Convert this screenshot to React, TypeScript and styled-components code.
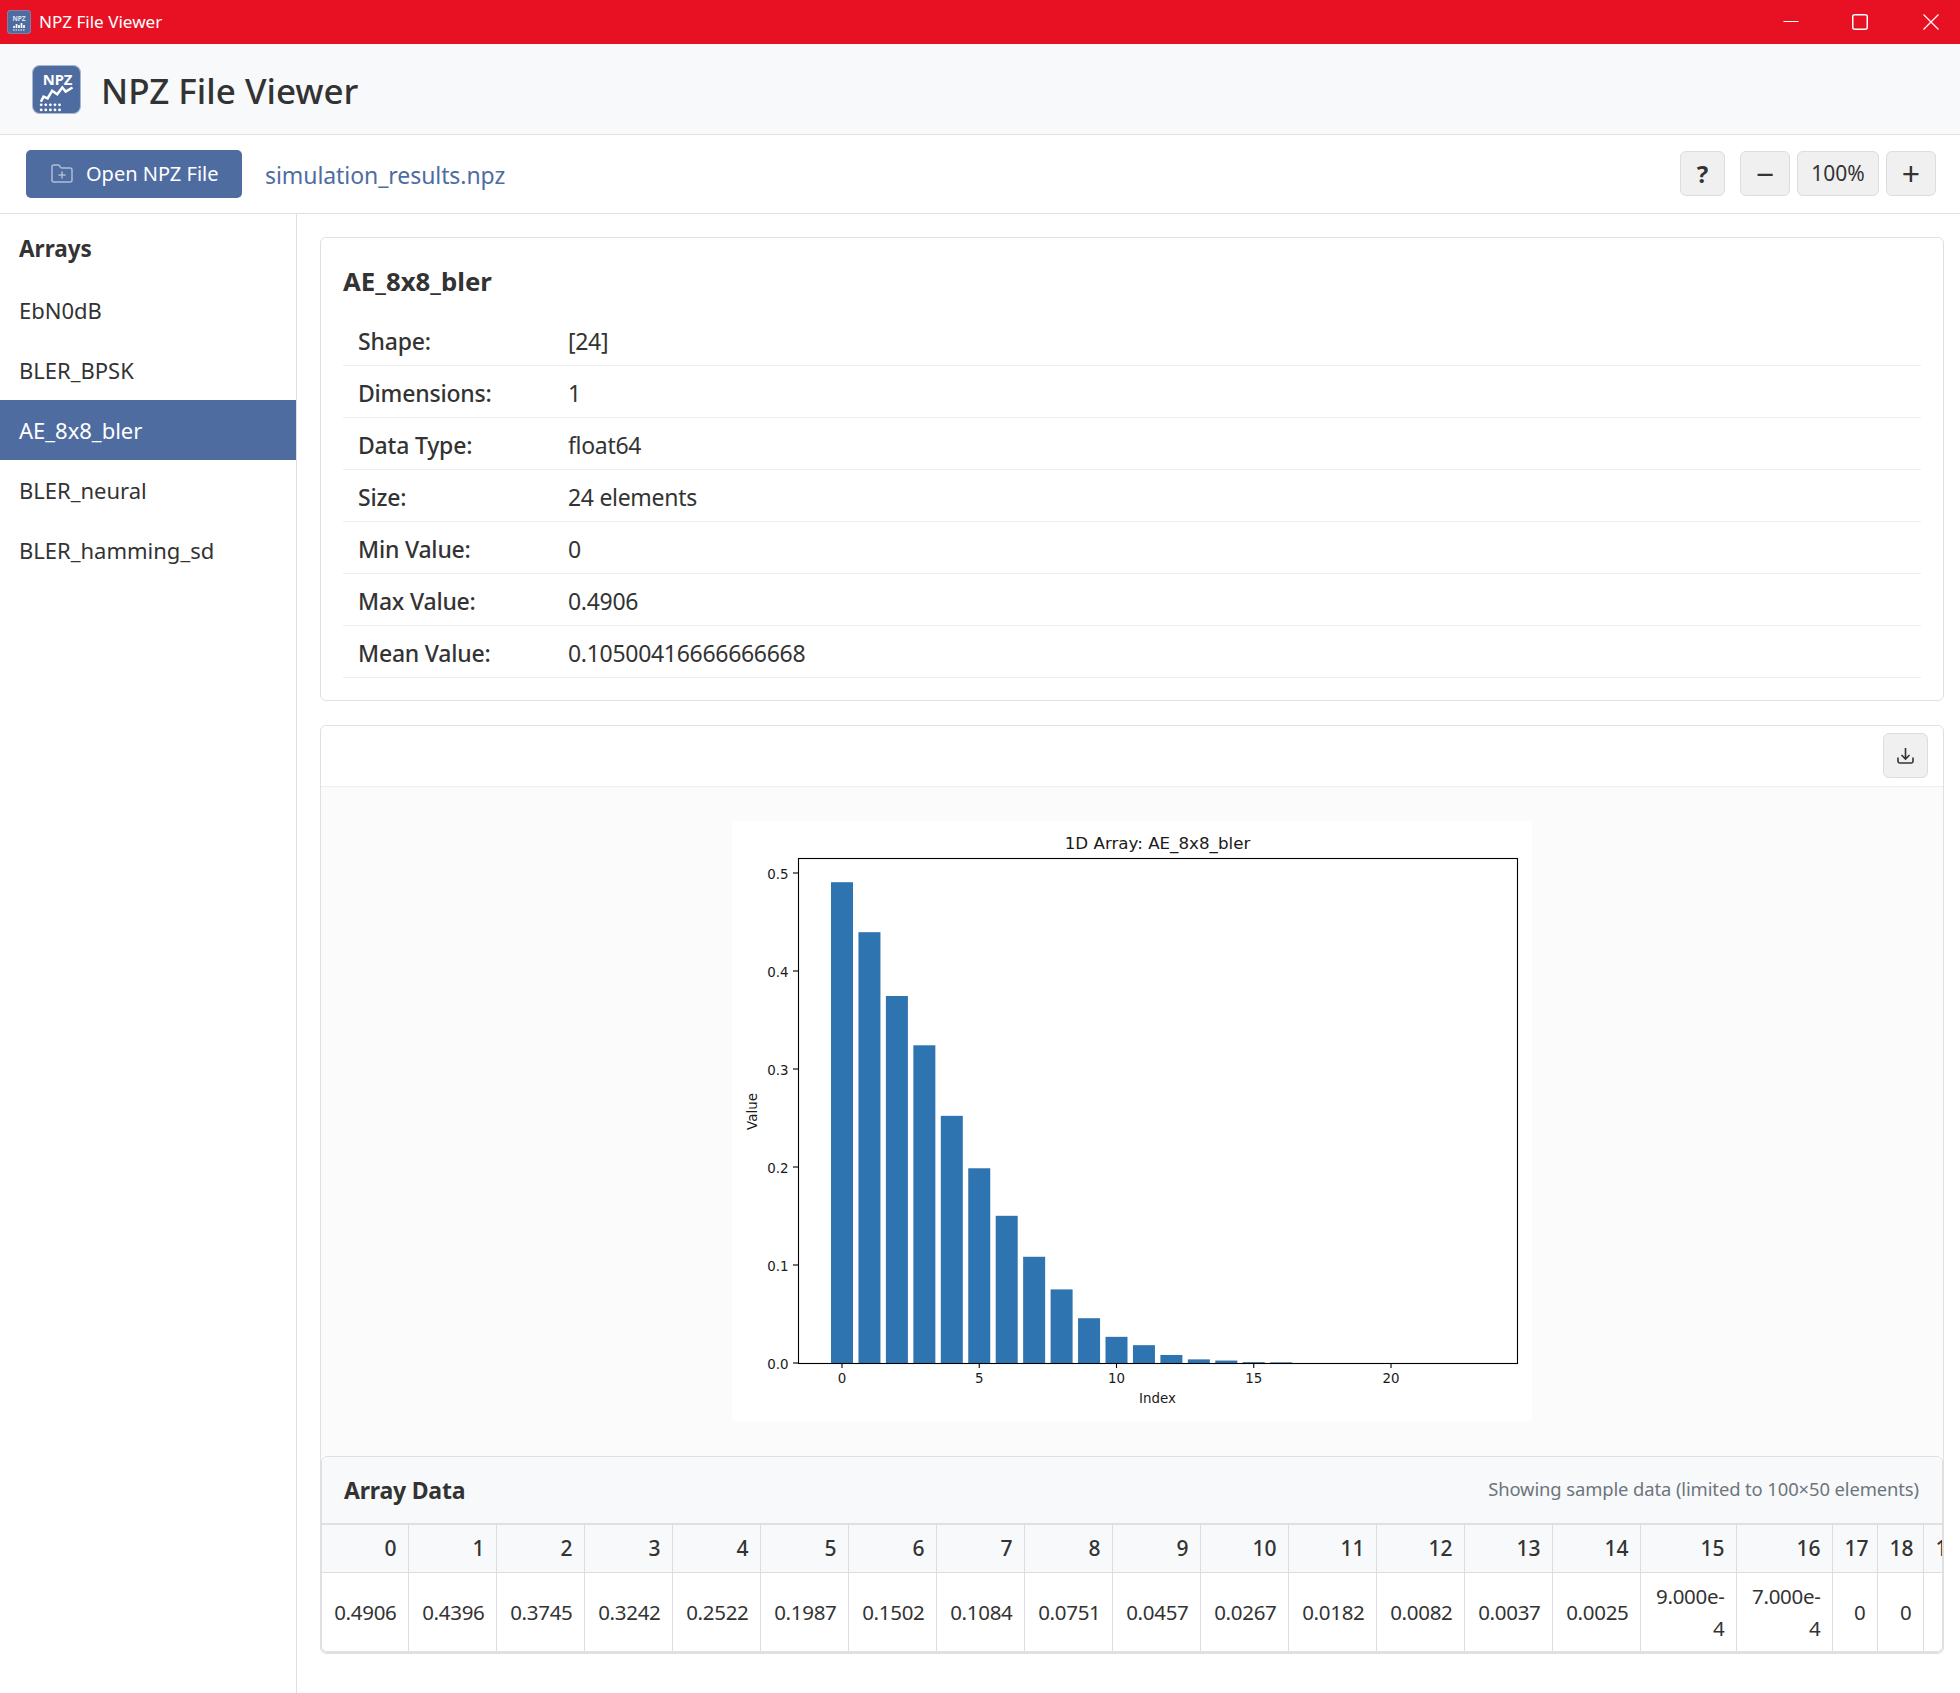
import {FC} from 'react'
import styled, {createGlobalStyle} from 'styled-components'
import {FolderPlus} from 'lucide-react'

const values = [0.4906, 0.4396, 0.3745, 0.3242, 0.2522, 0.1987, 0.1502, 0.1084, 0.0751, 0.0457, 0.0267, 0.0182, 0.0082, 0.0037, 0.0025, 0.0009, 0.0007, 0, 0, 0, 0, 0, 0, 0]
const labels = ['0.4906', '0.4396', '0.3745', '0.3242', '0.2522', '0.1987', '0.1502', '0.1084', '0.0751', '0.0457', '0.0267', '0.0182', '0.0082', '0.0037', '0.0025', '9.000e-4', '7.000e-4', '0', '0', '0', '0', '0', '0', '0']
const colWidths = [87, 88, 88, 88, 88, 88, 88, 88, 88, 88, 88, 88, 88, 88, 88, 96, 96, 45, 46, 46, 46, 46, 46, 46]
const arrays = ['EbN0dB', 'BLER_BPSK', 'AE_8x8_bler', 'BLER_neural', 'BLER_hamming_sd']
const info = [
  ['Shape:', '[24]'],
  ['Dimensions:', '1'],
  ['Data Type:', 'float64'],
  ['Size:', '24 elements'],
  ['Min Value:', '0'],
  ['Max Value:', '0.4906'],
  ['Mean Value:', '0.10500416666666668'],
]

const GlobalStyle = createGlobalStyle`
  html, body {
    margin: 0;
    padding: 0;
    background: #ffffff;
  }
  body {
    font-family: "Noto Sans", "Open Sans", sans-serif;
    color: #333333;
  }
  * {
    box-sizing: border-box;
  }
`

const Page = styled.div`
  width: 1960px;
  height: 1693px;
  display: flex;
  flex-direction: column;
  overflow: hidden;
`

const TitleBar = styled.div`
  height: 44px;
  flex: none;
  background: #e81123;
  color: #ffffff;
  display: flex;
  align-items: center;
  gap: 11px;
  padding-left: 7px;
`

const TitleText = styled.span`
  margin: -2px 0 0 -3px;
  font-size: 17.1px;
  flex: 1;
`

const WindowButton = styled.div<{$pr?: number}>`
  width: 59px;
  height: 44px;
  padding-right: ${p => p.$pr ?? 0}px;
  display: flex;
  align-items: center;
  justify-content: center;
`

const Header = styled.header`
  height: 91px;
  flex: none;
  background: #f8f9fa;
  border-bottom: 1px solid #e0e0e0;
  display: flex;
  align-items: center;
  padding-left: 32px;
  gap: 20px;
`

const AppTitle = styled.h1`
  margin: 2px 0 0;
  font-size: 35px;
  font-weight: 500;
  color: #333333;
`

const Toolbar = styled.div`
  height: 79px;
  flex: none;
  border-bottom: 1px solid #e0e0e0;
  display: flex;
  align-items: center;
  padding: 0 24px 0 26px;
`

const OpenButton = styled.button`
  width: 216px;
  height: 48px;
  margin-top: -1px;
  background: #4f6ca1;
  color: #ffffff;
  border: none;
  border-radius: 5px;
  font-family: inherit;
  font-size: 20px;
  display: flex;
  align-items: center;
  padding: 0 0 0 24px;
  gap: 12px;

  svg {
    opacity: 0.55;
  }
`

const FileName = styled.span`
  margin: 2px 0 0 23px;
  font-size: 23px;
  letter-spacing: -0.07px;
  color: #4f6ca1;
  flex: 1;
`

const ToolButton = styled.button<{$w: number; $ml?: number; $fs?: number}>`
  width: ${p => p.$w}px;
  height: 45px;
  margin-left: ${p => p.$ml ?? 7}px;
  margin-top: -1px;
  background: #f0f0f0;
  border: 1px solid #dddddd;
  border-radius: 6px;
  font-family: inherit;
  font-size: ${p => p.$fs ?? 21}px;
  line-height: 1;
  color: #333333;
  padding: 0;
  display: flex;
  align-items: center;
  justify-content: center;
`

const HelpButton = styled(ToolButton)`
  font-weight: 700;
`

const Body = styled.div`
  flex: 1;
  display: flex;
  min-height: 0;
`

const Sidebar = styled.aside`
  width: 297px;
  flex: none;
  border-right: 1px solid #e0e0e0;
`

const SidebarTitle = styled.h2`
  margin: 0;
  height: 66px;
  padding: 0 0 0 19px;
  line-height: 70px;
  font-size: 22.5px;
  font-weight: 700;
`

const ArrayItem = styled.div<{$active?: boolean}>`
  height: 60px;
  line-height: 61px;
  padding-left: 19px;
  font-size: 22px;
  background: ${p => (p.$active ? '#4f6ca1' : 'transparent')};
  color: ${p => (p.$active ? '#ffffff' : '#333333')};
`

const Main = styled.main`
  flex: 1;
  min-width: 0;
  padding: 23px 16px 0 23px;
  display: flex;
  flex-direction: column;
  gap: 24px;
`

const InfoCard = styled.section`
  height: 464px;
  flex: none;
  border: 1px solid #e0e0e0;
  border-radius: 6px;
  padding: 22px 22px 0;
`

const InfoTitle = styled.h3`
  margin: 0 0 12px;
  line-height: 42px;
  font-size: 25.8px;
  font-weight: 700;
`

const InfoRow = styled.div`
  height: 52px;
  display: grid;
  grid-template-columns: 210px 1fr;
  align-items: center;
  padding-left: 15px;
  padding-top: 3px;
  border-bottom: 1px solid #eeeeee;
  font-size: 23px;
  letter-spacing: -0.3px;
`

const InfoLabel = styled.span`
  font-weight: 500;
  letter-spacing: -0.2px;
`

const ViewCard = styled.section`
  flex: none;
  height: 929px;
  border: 1px solid #e0e0e0;
  border-radius: 6px;
  overflow: hidden;
  display: flex;
  flex-direction: column;
`

const ViewHeader = styled.div`
  height: 61px;
  flex: none;
  border-bottom: 1px solid #eeeeee;
  display: flex;
  justify-content: flex-end;
  padding: 7px 15px 0 0;
`

const IconButton = styled(ToolButton)`
  margin: 0;
`

const PlotArea = styled.div`
  background: #fbfbfb;
  padding: 34px 0 35px;
  display: flex;
  justify-content: center;
`

const Figure = styled.svg`
  display: block;
  background: #ffffff;
`

const DataSection = styled.div`
  flex: 1;
  min-height: 0;
  border: 1px solid #e0e0e0;
  border-bottom-width: 2px;
  border-radius: 6px;
  overflow: hidden;
  background: #ffffff;
`

const DataHeader = styled.div`
  height: 68px;
  background: #f8f9fa;
  border-bottom: 2px solid #e0e0e0;
  display: flex;
  align-items: center;
  justify-content: space-between;
  padding: 0 23px 0 22px;
`

const DataTitle = styled.h3`
  margin: 0;
  font-size: 23px;
  font-weight: 700;
  letter-spacing: -0.2px;
`

const DataNote = styled.span`
  margin-top: -3px;
  font-size: 18.4px;
  letter-spacing: -0.1px;
  color: #6c757d;
`

const Table = styled.table`
  margin-left: -1px;
  border-collapse: collapse;
  table-layout: fixed;
  font-size: 20.5px;
  line-height: 32px;
`

const HeadCell = styled.th`
  height: 47px;
  padding: 0 11px 0 12px;
  text-align: right;
  font-size: 21px;
  font-weight: 500;
  background: #f8f9fa;
  border-right: 1px solid #dddddd;
  border-bottom: 1px solid #dddddd;
`

const DataCell = styled.td`
  height: 80px;
  padding: 0 11px 0 13px;
  text-align: right;
  letter-spacing: -0.3px;
  border-right: 1px solid #dddddd;
`

const AppIcon: FC<{size: number; small?: boolean}> = ({size, small}) => (
  <svg width={size} height={size} viewBox="0 0 48 48">
    <rect x="0.5" y="0.5" width="47" height="47" rx="7" fill="#4f6ca1" stroke="#a9b8d2" />
    {small ? (
      <>
        <text x="24" y="21" textAnchor="middle" fontSize="13" fontWeight="700" fill="#dfe5f0" fontFamily="Noto Sans, sans-serif">NPZ</text>
        <path d="M14 36v-4M19 36v-8M24 36v-6M29 36v-10M34 36v-6" stroke="#ffffff" strokeWidth="3.4" />
        <path d="M12 40h25" stroke="#ffffff" strokeWidth="2.4" strokeDasharray="3 2" />
      </>
    ) : (
      <>
        <text x="25" y="19.5" textAnchor="middle" fontSize="14.5" fontWeight="700" fill="#ffffff" fontFamily="Noto Sans, sans-serif">NPZ</text>
        <polyline points="8.7,36 11.3,31 15.3,32.7 19.7,25.3 24.7,28.7 29.7,22 33,26 39.7,22" fill="none" stroke="#ffffff" strokeWidth="2.4" />
        {[9, 13.5, 18, 22.5, 27].map(x => (
          <g key={x} fill="#ffffff">
            <circle cx={x} cy="39" r="1.4" />
            <circle cx={x} cy="44" r="1.4" />
          </g>
        ))}
      </>
    )}
  </svg>
)

const figX = (v: number) => 110 + v * 27.45
const figY = (v: number) => 542 - v * 980
const chartText = {fontFamily: 'DejaVu Sans, sans-serif', fill: '#1a1a1a'}

const BarChart: FC = () => (
  <Figure width={800} height={600} viewBox="0 0 800 600">
    {values.map((v, i) => (
      <rect key={i} x={figX(i) - 11} y={figY(v)} width={22} height={542 - figY(v)} fill="#2e74b0" />
    ))}
    <rect x="66.5" y="37.5" width="719" height="505" fill="none" stroke="#000000" strokeWidth="1.1" />
    {[0, 5, 10, 15, 20].map(t => (
      <g key={t}>
        <line x1={figX(t)} x2={figX(t)} y1="542" y2="547" stroke="#000000" strokeWidth="1.1" />
        <text x={figX(t)} y="561.5" textAnchor="middle" fontSize="13.4" {...chartText}>{t}</text>
      </g>
    ))}
    {[0, 0.1, 0.2, 0.3, 0.4, 0.5].map(t => (
      <g key={t}>
        <line x1="61" x2="66" y1={figY(t)} y2={figY(t)} stroke="#000000" strokeWidth="1.1" />
        <text x="56.5" y={figY(t) + 5.5} textAnchor="end" fontSize="13.4" {...chartText}>{t.toFixed(1)}</text>
      </g>
    ))}
    <text x="425.5" y="28" textAnchor="middle" fontSize="16.7" {...chartText}>1D Array: AE_8x8_bler</text>
    <text x="425.5" y="582" textAnchor="middle" fontSize="13.4" {...chartText}>Index</text>
    <text transform="translate(25 290.5) rotate(-90)" textAnchor="middle" fontSize="13.4" {...chartText}>Value</text>
  </Figure>
)

const App: FC = () => (
  <Page>
    <GlobalStyle />
    <TitleBar>
      <AppIcon size={24} small />
      <TitleText>NPZ File Viewer</TitleText>
      <WindowButton>
        <svg width="16" height="16"><line x1="0.5" x2="15.5" y1="7.5" y2="7.5" stroke="#fff" /></svg>
      </WindowButton>
      <WindowButton $pr={2}>
        <svg width="16" height="16"><rect x="0.75" y="0.75" width="14.5" height="14.5" rx="2" fill="none" stroke="#fff" strokeWidth="1.5" /></svg>
      </WindowButton>
      <WindowButton>
        <svg width="16" height="16"><path d="M0.5 0.5l15 15M15.5 0.5l-15 15" stroke="#fff" strokeWidth="1.2" /></svg>
      </WindowButton>
    </TitleBar>
    <Header>
      <AppIcon size={49} />
      <AppTitle>NPZ File Viewer</AppTitle>
    </Header>
    <Toolbar>
      <OpenButton><FolderPlus size={24} strokeWidth={1.5} />Open NPZ File</OpenButton>
      <FileName>simulation_results.npz</FileName>
      <HelpButton $w={45} $fs={24}>?</HelpButton>
      <ToolButton $w={50} $ml={15} $fs={32}>−</ToolButton>
      <ToolButton $w={82}>100%</ToolButton>
      <ToolButton $w={50} $fs={32}>+</ToolButton>
    </Toolbar>
    <Body>
      <Sidebar>
        <SidebarTitle>Arrays</SidebarTitle>
        {arrays.map(a => <ArrayItem key={a} $active={a === 'AE_8x8_bler'}>{a}</ArrayItem>)}
      </Sidebar>
      <Main>
        <InfoCard>
          <InfoTitle>AE_8x8_bler</InfoTitle>
          {info.map(([k, v]) => (
            <InfoRow key={k}><InfoLabel>{k}</InfoLabel><span>{v}</span></InfoRow>
          ))}
        </InfoCard>
        <ViewCard>
          <ViewHeader>
            <IconButton $w={45}>
              <svg width="17" height="16" viewBox="0 0 17 16" fill="none" stroke="#333333" strokeWidth="1.6">
                <path d="M8.5 0v11M4.5 7l4 4 4-4" />
                <path d="M1 9.5v3.7a1.8 1.8 0 0 0 1.8 1.8h11.4a1.8 1.8 0 0 0 1.8-1.8V9.5" />
              </svg>
            </IconButton>
          </ViewHeader>
          <PlotArea><BarChart /></PlotArea>
          <DataSection>
            <DataHeader>
              <DataTitle>Array Data</DataTitle>
              <DataNote>Showing sample data (limited to 100×50 elements)</DataNote>
            </DataHeader>
            <Table style={{width: colWidths.reduce((a, b) => a + b, 0)}}>
              <colgroup>
                {colWidths.map((w, i) => <col key={i} style={{width: w}} />)}
              </colgroup>
              <thead>
                <tr>{labels.map((_, i) => <HeadCell key={i}>{i}</HeadCell>)}</tr>
              </thead>
              <tbody>
                <tr>{labels.map((l, i) => <DataCell key={i}>{l}</DataCell>)}</tr>
              </tbody>
            </Table>
          </DataSection>
        </ViewCard>
      </Main>
    </Body>
  </Page>
)

export default App
